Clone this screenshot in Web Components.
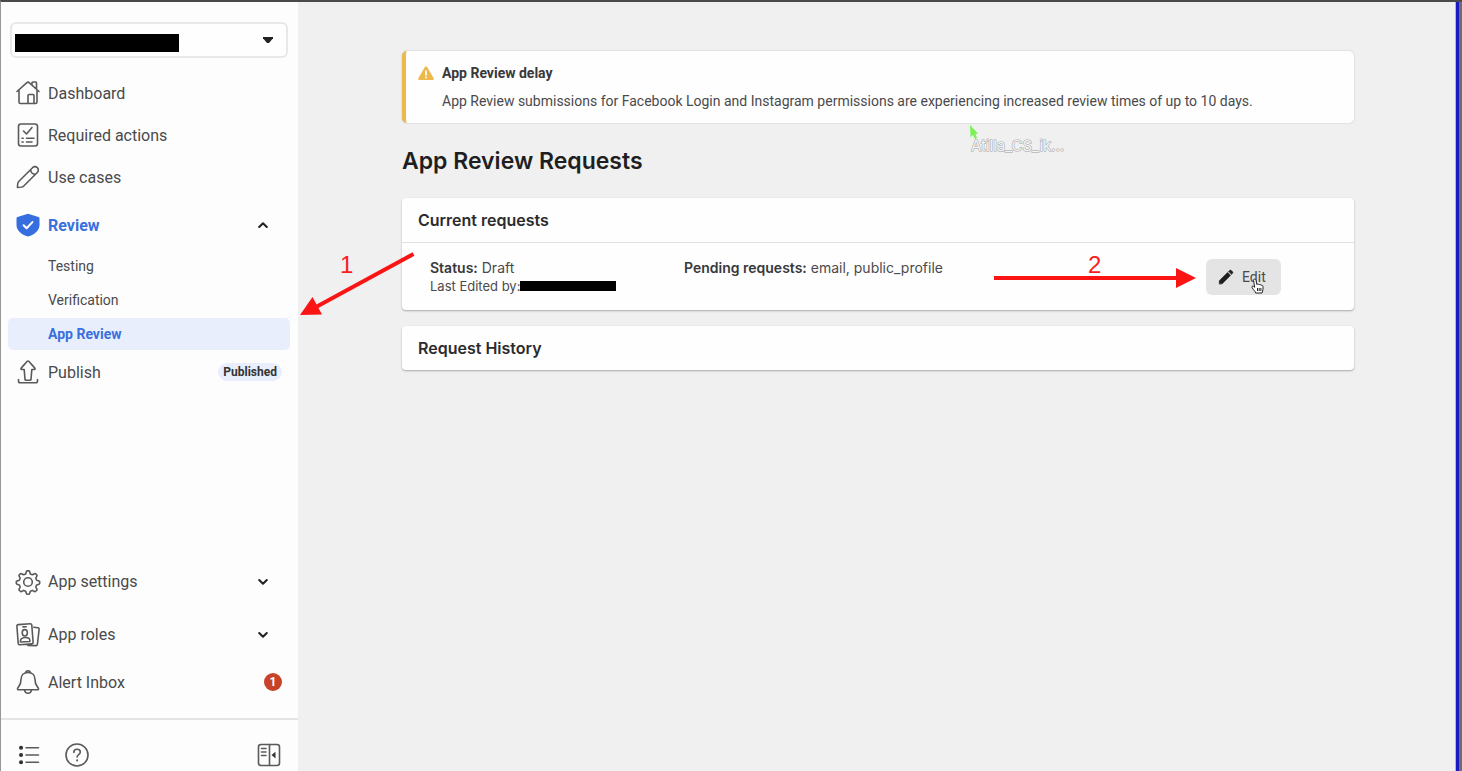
<!DOCTYPE html>
<html lang="en">
<head>
<meta charset="utf-8">
<meta name="viewport" content="width=device-width, initial-scale=1">
<title>App Review</title>
<style>
    html, body {
        height: 100%;
    }

    body {
        margin: 0;
        overflow: hidden;
        background: #f0f0f0;
        color: #4a4a4c;
        font-family: Roboto, "Liberation Sans", sans-serif;
        font-size: 16px;
    }
</style>
</head>
<body>
<app-shell>
    <side-nav slot="nav">
        <nav-item icon="home">Dashboard</nav-item>
        <nav-item icon="checklist">Required actions</nav-item>
        <nav-item icon="pencil">Use cases</nav-item>
        <nav-group icon="shield" open>
            Review
            <nav-subitem slot="items">Testing</nav-subitem>
            <nav-subitem slot="items">Verification</nav-subitem>
            <nav-subitem slot="items" current>App Review</nav-subitem>
        </nav-group>
        <nav-item icon="publish">Publish<status-pill slot="end">Published</status-pill></nav-item>

        <nav-group slot="bottom" icon="gear" tall>App settings</nav-group>
        <nav-group slot="bottom" icon="roles" tall>App roles</nav-group>
        <nav-item slot="bottom" icon="bell">Alert Inbox<count-badge slot="end">1</count-badge></nav-item>
    </side-nav>

    <notice-banner>
        <span slot="title">App Review delay</span>
        App Review submissions for Facebook Login and Instagram permissions are experiencing increased review times of up to 10 days.
    </notice-banner>
    <page-title>App Review Requests</page-title>
    <page-card>
        <span slot="title">Current requests</span>
        <request-row status="Draft" pending="email, public_profile"></request-row>
    </page-card>
    <page-card>
        <span slot="title">Request History</span>
    </page-card>
</app-shell>
<guide-overlay></guide-overlay>

<script>
// Line icons on a 24x24 grid
const ICONS = {
    home: `<path d="M1 10.500 10.600 1.900a2 2 0 0 1 2.800 0L23 10.500M3 9v12a1.500 1.500 0 0 0 1.500 1.500h15A1.500 1.500 0 0 0 21 21V9M16 4.300V1.800a.8.8 0 0 1 .8-.8h2.900a.8.8 0 0 1 .8.8v6.400M12 22.500v-8a1 1 0 0 1 1-1h4a1 1 0 0 1 1 1v8"/>`,
    checklist: `<rect x="2.500" y="1" width="19" height="22" rx="2.500"/><path d="m7.500 8 3 3 5.500-6.500M10.500 15.300H18M10.500 19H16M6 15.300h1.200M6 19h1.200"/>`,
    pencil: `<path d="M1.500 22.500c0-3 .2-5 1.200-6L16.500 2.700a3.300 3.300 0 0 1 4.800 0 3.300 3.300 0 0 1 0 4.800L7.500 21.300c-1 1-3 1.200-6 1.200zM14.600 4.600a5 5 0 0 0 4.800 4.800"/>`,
    shield: `<path d="M12 .8 22.500 4c.7.200 1 .6 1 1.300V12c0 5.500-4.700 9.500-11.500 11.500C5.200 21.500.5 17.500.5 12V5.300c0-.7.3-1.100 1-1.300z" fill="#366ee0" stroke="none"/><path d="m7.600 12.300 3 3 5.800-6.200" stroke="#fff" stroke-width="2"/>`,
    publish: `<path d="M2.500 19.500V21A1.800 1.800 0 0 0 4.300 22.800h15.400a1.800 1.800 0 0 0 1.800-1.800v-1.500M9 19.500 8.200 9.500H5.700c-.8 0-1-.8-.5-1.400L11.200 1.300a1.100 1.100 0 0 1 1.600 0l6 6.800c.5.600.3 1.400-.5 1.400h-2.500L15 19.500c-.1.600-.4.800-1 .8h-4c-.6 0-.9-.2-1-.8z"/>`,
    gear: `<circle cx="12" cy="12" r="4.300"/><path d="M10.400 1.600a1 1 0 0 1 .9-.7h1.400a1 1 0 0 1 .9.7l.7 2.300 2.100.9 2.100-1.100a1 1 0 0 1 1.200.2l1 1a1 1 0 0 1 .2 1.200l-1.100 2.100.9 2.100 2.300.7a1 1 0 0 1 .7.900v1.400a1 1 0 0 1-.7.900l-2.300.7-.9 2.100 1.100 2.100a1 1 0 0 1-.2 1.200l-1 1a1 1 0 0 1-1.200.2l-2.100-1.100-2.100.9-.7 2.300a1 1 0 0 1-.9.700h-1.400a1 1 0 0 1-.9-.7l-.7-2.300-2.100-.9-2.100 1.100a1 1 0 0 1-1.200-.2l-1-1a1 1 0 0 1-.2-1.200l1.100-2.100-.9-2.100-2.300-.7a1 1 0 0 1-.7-.9v-1.400a1 1 0 0 1 .7-.9l2.300-.7.9-2.100-1.100-2.100a1 1 0 0 1 .2-1.200l1-1a1 1 0 0 1 1.200-.2l2.100 1.100 2.100-.9z"/>`,
    roles: `<path d="M2.300 1.600 14.200.8a1.500 1.500 0 0 1 1.600 1.400l1.300 17.100a1.500 1.500 0 0 1-1.400 1.600l-11.900.8a1.500 1.500 0 0 1-1.600-1.400L.9 3.200a1.500 1.500 0 0 1 1.400-1.600zM17.800 4.300l4.200.5a1.300 1.300 0 0 1 1.100 1.500l-1.700 15.200a1.300 1.300 0 0 1-1.500 1.100L12 22.500M7 3.900l3.200-.2"/><ellipse cx="8.800" cy="9.800" rx="2.600" ry="3.200"/><path d="m4.400 19 .1-1.300c.1-1.800 2-3 4.600-3.200 2.600-.1 4.600 1 4.700 2.700l.1 1.300z"/>`,
    bell: `<path d="M12 2.500c-4.500 0-7 3.100-7 7C5 15 3 16 1.700 18.200c-.5.900-.1 1.600.9 1.600h18.800c1 0 1.400-.7.9-1.600C21 16 19 15 19 9.500c0-3.900-2.500-7-7-7zM9.800 2.700c0-1.200.9-2 2.200-2s2.200.8 2.200 2M8.500 20c.3 2 1.600 3.200 3.500 3.200s3.200-1.200 3.500-3.200"/>`,
    list: `<path d="M9 4.700h12.500M9 12h12.500M9 19.300h12.500"/><path d="M4 4.700h.1M4 12h.1M4 19.300h.1" stroke="#333" stroke-width="4"/>`,
    help: `<circle cx="12" cy="12" r="11"/><path d="M8.800 9.500c0-2 1.400-3.200 3.300-3.200 1.800 0 3.200 1.100 3.200 2.800 0 2.600-3.200 2.500-3.200 5"/><path d="M12.100 17.300v.1" stroke-width="2"/>`,
    collapse: `<rect x="1.500" y="1.500" width="21" height="21" rx="2.500"/><path d="M12.500 1.500v21M4.500 5.500h4.500M4.500 9h4.500M4.500 12.500h4.500"/><path d="m18.500 8.800-4 3.300 4 3.300z" fill="#333" stroke="none"/>`,
    edit: `<path d="M2 22v-4.300L14.300 5.400l4.300 4.300L6.300 22zM16 3.700l1.500-1.500a1.700 1.700 0 0 1 2.300 0l2 2a1.700 1.700 0 0 1 0 2.300L20.300 8z" fill="#1f1f21" stroke="#1f1f21" stroke-width="1"/>`,
    chevron: `<path d="m5.500 8.500 6.500 6.500 6.500-6.500" stroke="#222" stroke-width="3.500"/>`,
    warning: `<path d="M10.300 2.900a2 2 0 0 1 3.400 0l9.800 17c.8 1.300 0 2.600-1.500 2.600H2C.5 22.500-.3 21.200.5 19.900z" fill="#edb94b" stroke="none"/><path d="M12 9v6M12 18.500v.3" stroke="#fff" stroke-width="2.600"/>`
};

// Shared base: one open shadow root, filled from render()
class BaseElement extends HTMLElement {
    constructor() {
        super();
        this.attachShadow({ mode: "open" });
    }

    connectedCallback() {
        this.shadowRoot.innerHTML = this.render();
    }
}

class UiIcon extends BaseElement {
    render() {
        return `
            <style>
                :host { display: block; flex: none; width: 24px; height: 24px; }
                svg { display: block; width: 100%; height: 100%; overflow: visible; }
            </style>
            <svg viewBox="0 0 24 24" fill="none" stroke="#5a5a5c" stroke-width="1.6" stroke-linecap="round" stroke-linejoin="round" aria-hidden="true">
                ${ICONS[this.getAttribute("name")] || ""}
            </svg>
        `;
    }
}

class AppShell extends BaseElement {
    render() {
        return `
            <style>
                :host {
                    display: flex;
                    box-sizing: border-box;
                    height: 100vh;
                    border-top: 2px solid #4b484b;
                    border-left: 1px solid #979797;
                }
                main {
                    flex: 1;
                    min-width: 0;
                    padding: 49px 101px 0 104px;
                }
                .edge {
                    flex: none;
                    width: 3px;
                    border-left: 1px solid #b5b5dc;
                    border-right: 3px solid #6e6e70;
                    background: #1a1ac4;
                }
            </style>
            <slot name="nav"></slot>
            <main><slot></slot></main>
            <div class="edge"></div>
        `;
    }
}

class SideNav extends BaseElement {
    render() {
        return `
            <style>
                :host {
                    display: flex;
                    flex: none;
                    flex-direction: column;
                    box-sizing: border-box;
                    width: 297px;
                    background: #fdfdfd;
                }
                .picker {
                    display: grid;
                    align-items: center;
                    margin: 20px 10px 14px 9px;
                }
                .picker > * { grid-area: 1 / 1; }
                select {
                    appearance: none;
                    width: 100%;
                    height: 36px;
                    border: 2px solid #e8e8e8;
                    border-radius: 6px;
                    background: #fefefe;
                    font: inherit;
                }
                .redacted {
                    width: 164px;
                    height: 18px;
                    margin: 6px 0 0 5px;
                    background: #000;
                    pointer-events: none;
                }
                .caret {
                    justify-self: end;
                    width: 10px;
                    height: 6px;
                    margin-right: 15px;
                    background: #222;
                    clip-path: polygon(0 0, 100% 0, 100% 20%, 60% 100%, 40% 100%, 0 20%);
                    pointer-events: none;
                }
                nav {
                    display: flex;
                    flex: 1;
                    flex-direction: column;
                }
                .bottom { margin-top: auto; padding-bottom: 15px; }
                footer {
                    display: flex;
                    gap: 24px;
                    padding: 23px 17px 4px 16px;
                    border-top: 2px solid #e4e4e4;
                }
                button {
                    padding: 0;
                    border: 0;
                    background: none;
                }
                button:last-child { margin-left: auto; }
            </style>
            <div class="picker">
                <select aria-label="App"><option></option></select>
                <span class="redacted"></span>
                <span class="caret"></span>
            </div>
            <nav>
                <slot></slot>
                <div class="bottom"><slot name="bottom"></slot></div>
            </nav>
            <footer>
                <button type="button" aria-label="Menu"><ui-icon name="list"></ui-icon></button>
                <button type="button" aria-label="Help"><ui-icon name="help"></ui-icon></button>
                <button type="button" aria-label="Collapse"><ui-icon name="collapse"></ui-icon></button>
            </footer>
        `;
    }
}

class NavItem extends BaseElement {
    render() {
        return `
            <style>
                :host { display: block; }
                a {
                    display: flex;
                    align-items: center;
                    gap: 8px;
                    height: 42px;
                    padding: 0 16px 0 15px;
                    color: inherit;
                    text-decoration: none;
                }
                slot[name="end"] { display: block; margin-left: auto; }
            </style>
            <a href="#"><ui-icon name="${this.getAttribute("icon")}"></ui-icon><span><slot></slot></span><slot name="end"></slot></a>
        `;
    }
}

class NavGroup extends BaseElement {
    render() {
        const open = this.hasAttribute("open");

        return `
            <style>
                :host { display: block; }
                :host([open]) { padding-top: 3px; }
                button {
                    display: flex;
                    align-items: center;
                    gap: 8px;
                    width: 100%;
                    height: 48px;
                    padding: 0 28px 0 15px;
                    border: 0;
                    background: none;
                    color: inherit;
                    font: inherit;
                    text-align: left;
                }
                :host([tall]) button { height: 53px; }
                :host([open]) button { color: #3a70dd; font-weight: 700; }
                .chevron { width: 14px; height: 14px; margin-left: auto; }
                :host([open]) .chevron { transform: rotate(180deg); }
            </style>
            <button type="button" aria-expanded="${open}">
                <ui-icon name="${this.getAttribute("icon")}"></ui-icon>
                <span><slot></slot></span>
                <ui-icon class="chevron" name="chevron"></ui-icon>
            </button>
            <slot name="items"></slot>
        `;
    }
}

class NavSubitem extends BaseElement {
    render() {
        return `
            <style>
                :host { display: block; padding: 1px 8px 1px 7px; font-size: 14px; }
                a {
                    display: block;
                    padding-left: 40px;
                    border-radius: 5px;
                    color: inherit;
                    line-height: 32px;
                    text-decoration: none;
                }
                :host([current]) a {
                    background: #e8eefc;
                    color: #3a70dd;
                    font-weight: 700;
                }
            </style>
            <a href="#"><slot></slot></a>
        `;
    }
}

class StatusPill extends BaseElement {
    render() {
        return `
            <style>
                :host {
                    display: block;
                    padding: 0 5px;
                    border-radius: 9px;
                    background: #e8eefc;
                    color: #333335;
                    font-size: 12px;
                    font-weight: 700;
                    line-height: 18px;
                }
            </style>
            <slot></slot>
        `;
    }
}

class CountBadge extends BaseElement {
    render() {
        return `
            <style>
                :host {
                    display: block;
                    width: 18px;
                    border-radius: 9px;
                    background: #c6432a;
                    color: #fff;
                    font-size: 12px;
                    font-weight: 700;
                    line-height: 18px;
                    text-align: center;
                }
            </style>
            <slot></slot>
        `;
    }
}

class NoticeBanner extends BaseElement {
    render() {
        return `
            <style>
                :host {
                    display: grid;
                    grid-template-columns: 16px 1fr;
                    column-gap: 8px;
                    row-gap: 8px;
                    padding: 12px;
                    border-left: 4px solid #ecb94c;
                    border-radius: 5px;
                    background: #fefefe;
                    box-shadow: 0 0 2px rgba(0, 0, 0, 0.2);
                    font-size: 14px;
                    line-height: 20px;
                }
                ui-icon { width: 16px; height: 16px; align-self: center; }
                .title { color: #38383a; font-weight: 700; }
                .text { grid-column: 2; }
            </style>
            <ui-icon name="warning"></ui-icon>
            <div class="title"><slot name="title"></slot></div>
            <div class="text"><slot></slot></div>
        `;
    }
}

class PageTitle extends BaseElement {
    render() {
        return `
            <style>
                h1 {
                    margin: 24px 0 23px;
                    color: #1f1f21;
                    font-family: Inter, Roboto, sans-serif;
                    font-size: 23px;
                    font-weight: 600;
                    line-height: 28px;
                }
            </style>
            <h1><slot></slot></h1>
        `;
    }
}

class PageCard extends BaseElement {
    render() {
        return `
            <style>
                :host {
                    display: block;
                    margin-bottom: 16px;
                    border-radius: 4px;
                    background: #fefefe;
                    box-shadow: 0 1px 2px rgba(0, 0, 0, 0.3);
                }
                h2 {
                    margin: 0;
                    padding: 0 16px;
                    color: #2b2b2d;
                    font-family: Inter, Roboto, sans-serif;
                    font-size: 16px;
                    font-weight: 600;
                    line-height: 44px;
                }
            </style>
            <h2><slot name="title"></slot></h2>
            <slot></slot>
        `;
    }
}

class RequestRow extends BaseElement {
    render() {
        return `
            <style>
                :host {
                    display: grid;
                    grid-template-columns: 254px 1fr 148px;
                    padding: 16px 0 15px 28px;
                    border-top: 1px solid #e2e2e2;
                    font-family: Inter, Roboto, sans-serif;
                    font-size: 14px;
                    line-height: 18px;
                }
                b { color: #38383a; font-weight: 600; }
                .editor { display: flex; align-items: center; font-size: 13px; }
                .redacted { width: 96px; height: 10px; background: #000; }
                button {
                    display: flex;
                    align-items: center;
                    gap: 8px;
                    height: 36px;
                    padding: 0 15px 0 12px;
                    border: 0;
                    border-radius: 6px;
                    background: #e4e4e4;
                    color: #4a4a4c;
                    font-family: Roboto, sans-serif;
                    font-size: 14px;
                }
                button ui-icon { width: 16px; height: 16px; }
            </style>
            <div>
                <div><b>Status:</b> ${this.getAttribute("status")}</div>
                <div class="editor">Last Edited by: <span class="redacted"></span></div>
            </div>
            <div><b>Pending requests:</b> ${this.getAttribute("pending")}</div>
            <div><button type="button"><ui-icon name="edit"></ui-icon>Edit</button></div>
        `;
    }
}

// Step arrows and pointers floating over the page
class GuideOverlay extends BaseElement {
    render() {
        return `
            <style>
                :host {
                    position: absolute;
                    top: 0;
                    left: 0;
                    pointer-events: none;
                }
                svg { display: block; }
                .step { fill: #fb1d1d; font: 24px "Liberation Sans", sans-serif; }
                .peer {
                    fill: #f4f4f4;
                    stroke: #a2a2a2;
                    stroke-width: 1;
                    font: 15px Inter, sans-serif;
                    paint-order: stroke;
                }
            </style>
            <svg width="1440" height="400" viewBox="0 0 1440 400">
                <g stroke="#fb1414" stroke-width="4">
                    <path d="M413.500 254 316 307"/>
                    <path d="M994 278h183"/>
                </g>
                <g fill="#fb1414">
                    <path d="m300 315 12.500-18 9.500 17.500z"/>
                    <path d="m1196 278-20-10v20z"/>
                </g>
                <text class="step" x="340" y="273">1</text>
                <text class="step" x="1088" y="273">2</text>
                <path d="m970 125 .5 12 2.500-2 2 4 2-1-1.500-4 2.500-.5z" fill="#7df05c"/>
                <text class="peer" x="971" y="151">Atilla_CS_ik...</text>
                <path transform="translate(1251 278)" d="M2.500 2.200c0-1.600 2.200-1.600 2.500 0l.8 4.300c.6-.8 2-.6 2.200.4.600-.7 1.900-.5 2.100.5.800-.5 1.900 0 1.900 1.200v2.600c0 1.500-.8 2.200-1 3.800H4.700c-.3-1.500-2.200-3-3.500-5.200-.8-1.300.4-2.300 1.500-1.400l1 .9zM6.500 10v3M8.200 10v3M9.900 10v3" fill="#fff" stroke="#222" stroke-width="1"/>
            </svg>
        `;
    }
}

customElements.define("ui-icon", UiIcon);
customElements.define("app-shell", AppShell);
customElements.define("side-nav", SideNav);
customElements.define("nav-item", NavItem);
customElements.define("nav-group", NavGroup);
customElements.define("nav-subitem", NavSubitem);
customElements.define("status-pill", StatusPill);
customElements.define("count-badge", CountBadge);
customElements.define("notice-banner", NoticeBanner);
customElements.define("page-title", PageTitle);
customElements.define("page-card", PageCard);
customElements.define("request-row", RequestRow);
customElements.define("guide-overlay", GuideOverlay);
</script>
</body>
</html>
